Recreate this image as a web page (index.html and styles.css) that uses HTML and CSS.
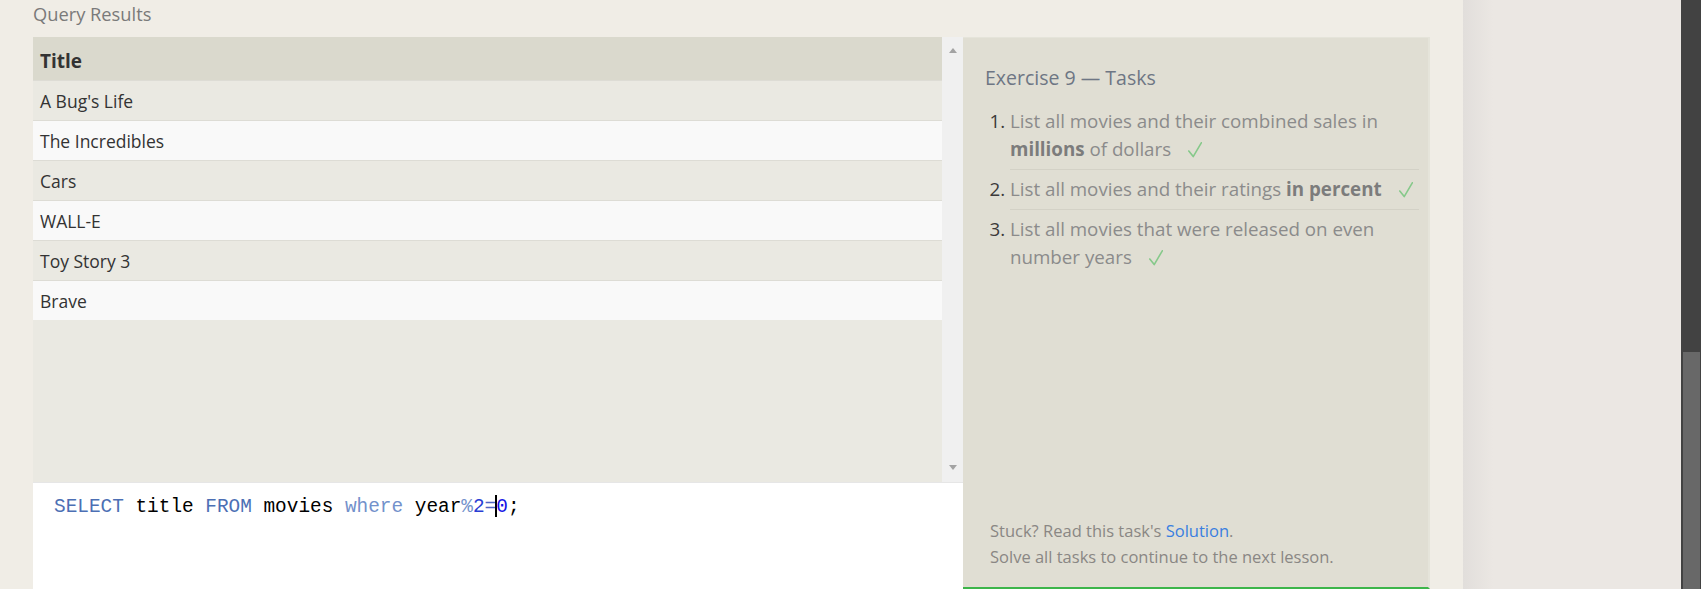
FILE: index.html
```html
<!DOCTYPE html>
<html>
<head>
<meta charset="utf-8">
<title>SQL Lesson</title>
<link rel="stylesheet" href="styles.css">
</head>
<body>
<div class="page">
  <main class="main">
    <div class="section-title">Query Results</div>
    <div class="workspace">
      <div class="left-col">
        <div class="results">
          <div class="results-body">
            <table class="results-table">
              <thead>
                <tr><th>Title</th></tr>
              </thead>
              <tbody>
                <tr class="odd"><td>A Bug's Life</td></tr>
                <tr class="even"><td>The Incredibles</td></tr>
                <tr class="odd"><td>Cars</td></tr>
                <tr class="even"><td>WALL-E</td></tr>
                <tr class="odd"><td>Toy Story 3</td></tr>
                <tr class="even"><td>Brave</td></tr>
              </tbody>
            </table>
          </div>
          <div class="vscroll">
            <span class="arrow-up"></span>
            <span class="arrow-down"></span>
          </div>
        </div>
        <div class="editor">
          <div class="code-line"><span class="kw">SELECT</span> <span class="id">title</span> <span class="kw">FROM</span> <span class="id">movies</span> <span class="kw2">where</span> <span class="id">year</span><span class="op">%</span><span class="num">2</span><span class="eq">=</span><span class="cursor"></span><span class="zero">0</span><span class="id">;</span></div>
        </div>
      </div>
      <aside class="tasks">
        <h2 class="tasks-title">Exercise 9 — Tasks</h2>
        <ol class="task-list">
          <li>List all movies and their combined sales in <b>millions</b> of dollars<span class="check"><svg width="14" height="16" viewBox="0 0 14 16"><polyline points="0.8,9 5.2,14.6 13.3,0.8" fill="none" stroke="#86c98a" stroke-width="1.6" stroke-linecap="round" stroke-linejoin="round"/></svg></span></li>
          <li>List all movies and their ratings <b>in percent</b><span class="check"><svg width="14" height="16" viewBox="0 0 14 16"><polyline points="0.8,9 5.2,14.6 13.3,0.8" fill="none" stroke="#86c98a" stroke-width="1.6" stroke-linecap="round" stroke-linejoin="round"/></svg></span></li>
          <li>List all movies that were released on even number years<span class="check"><svg width="14" height="16" viewBox="0 0 14 16"><polyline points="0.8,9 5.2,14.6 13.3,0.8" fill="none" stroke="#86c98a" stroke-width="1.6" stroke-linecap="round" stroke-linejoin="round"/></svg></span></li>
        </ol>
        <div class="stuck">
          <div>Stuck? Read this task's <a class="link" href="#">Solution</a>.</div>
          <div>Solve all tasks to continue to the next lesson.</div>
        </div>
      </aside>
    </div>
  </main>
  <div class="side"></div>
  <div class="page-scroll"><div class="page-thumb"></div></div>
</div>
</body>
</html>
```

FILE: styles.css
```css
html, body {
  margin: 0;
  padding: 0;
  height: 589px;
  overflow: hidden;
}

body {
  font-family: "Open Sans", "Noto Sans", sans-serif;
  background: #f0ede6;
}

.page {
  display: flex;
  height: 589px;
}

.main {
  width: 1463px;
  flex: none;
  box-sizing: border-box;
  padding-left: 33px;
  background: #f0ede6;
}

.section-title {
  font-size: 18.3px;
  line-height: 24px;
  color: #7a7a7a;
  margin: 2px 0 11px;
}

.workspace {
  display: flex;
  height: 552px;
}

.left-col {
  width: 930px;
  display: flex;
  flex-direction: column;
}

.results {
  display: flex;
  height: 445px;
  flex: none;
}

.results-body {
  flex: 1;
  background: #eae9e2;
}

.results-table {
  width: 100%;
  border-collapse: collapse;
  color: #333;
}

.results-table th {
  height: 43px;
  box-sizing: border-box;
  padding: 5px 7px 0;
  text-align: left;
  font-size: 19px;
  line-height: 24px;
  font-weight: 700;
  background: #dad9cd;
  color: #333;
}

.results-table td {
  height: 40px;
  box-sizing: border-box;
  padding: 2px 7px 0;
  border-top: 1px solid #dddcd5;
  font-size: 17.5px;
  line-height: 24px;
}

.results-table tr.odd td {
  background: #eae9e2;
}

.results-table tr.even td {
  background: #f9f9f9;
}

.vscroll {
  width: 21px;
  background: #f0f0f0;
  display: flex;
  flex-direction: column;
  justify-content: space-between;
  align-items: center;
  padding: 11px 0 12px;
  box-sizing: border-box;
}

.arrow-up {
  width: 0;
  height: 0;
  border-left: 4.5px solid transparent;
  border-right: 4.5px solid transparent;
  border-bottom: 5px solid #a3a3a3;
}

.arrow-down {
  width: 0;
  height: 0;
  border-left: 4.5px solid transparent;
  border-right: 4.5px solid transparent;
  border-top: 5px solid #a3a3a3;
}

.editor {
  flex: 1;
  background: #fff;
  padding: 12px 21px;
  border-top: 1px solid #e6e6e6;
  font-family: "Liberation Mono", "DejaVu Sans Mono", monospace;
  font-size: 19.4px;
  line-height: 24px;
  color: #000;
}

.code-line {
  white-space: pre;
}

.kw { color: #4c6fb4; }
.kw2 { color: #7391cb; }
.id { color: #000; }
.op { color: #7391cb; }
.num { color: #2a3dd4; }
.eq { color: #4f66c4; }
.zero { color: #1414e6; }

.cursor {
  display: inline-block;
  width: 0;
  height: 22px;
  border-left: 2px solid #000;
  margin-left: -1px;
  margin-right: -1px;
  vertical-align: -5px;
}

.tasks {
  width: 467px;
  flex: none;
  box-sizing: border-box;
  height: 552px;
  background: #e0ded3;
  border-top: 1px solid #e5e4da;
  border-right: 2px solid #e5e4da;
  border-bottom: 2px solid #3db54a;
  padding: 27.5px 9px 17px 22px;
  display: flex;
  flex-direction: column;
}

.tasks-title {
  margin: 0;
  font-size: 19.5px;
  line-height: 24px;
  font-weight: 400;
  color: #6e7684;
}

.task-list {
  margin: 12px 0 0;
  padding-left: 25px;
  font-size: 18.75px;
  line-height: 28px;
  color: #8b8b8b;
}

.task-list li {
  padding: 5.5px 0;
  border-bottom: 1px solid #d3d1c6;
}

.task-list li:last-child {
  border-bottom: none;
}

.task-list li::marker {
  color: #3c3a3a;
}

.task-list b {
  color: #7c7c7c;
  font-weight: 700;
}

.check {
  display: inline-block;
  margin-left: 17px;
  vertical-align: -2px;
  line-height: 0;
}

.stuck {
  margin-top: auto;
  padding-left: 5px;
  font-size: 16.5px;
  line-height: 26px;
  color: #8a8784;
}

.link {
  color: #3a7ee0;
  text-decoration: none;
}

.side {
  flex: 1;
  background: linear-gradient(to right, #e1dedb, #ebe7e3 30px);
}

.page-scroll {
  width: 20px;
  flex: none;
  background: #424242;
  display: flex;
  flex-direction: column;
  justify-content: flex-end;
  align-items: center;
}

.page-thumb {
  width: 17px;
  height: 237px;
  background: #686868;
  margin-left: 1px;
}
```
